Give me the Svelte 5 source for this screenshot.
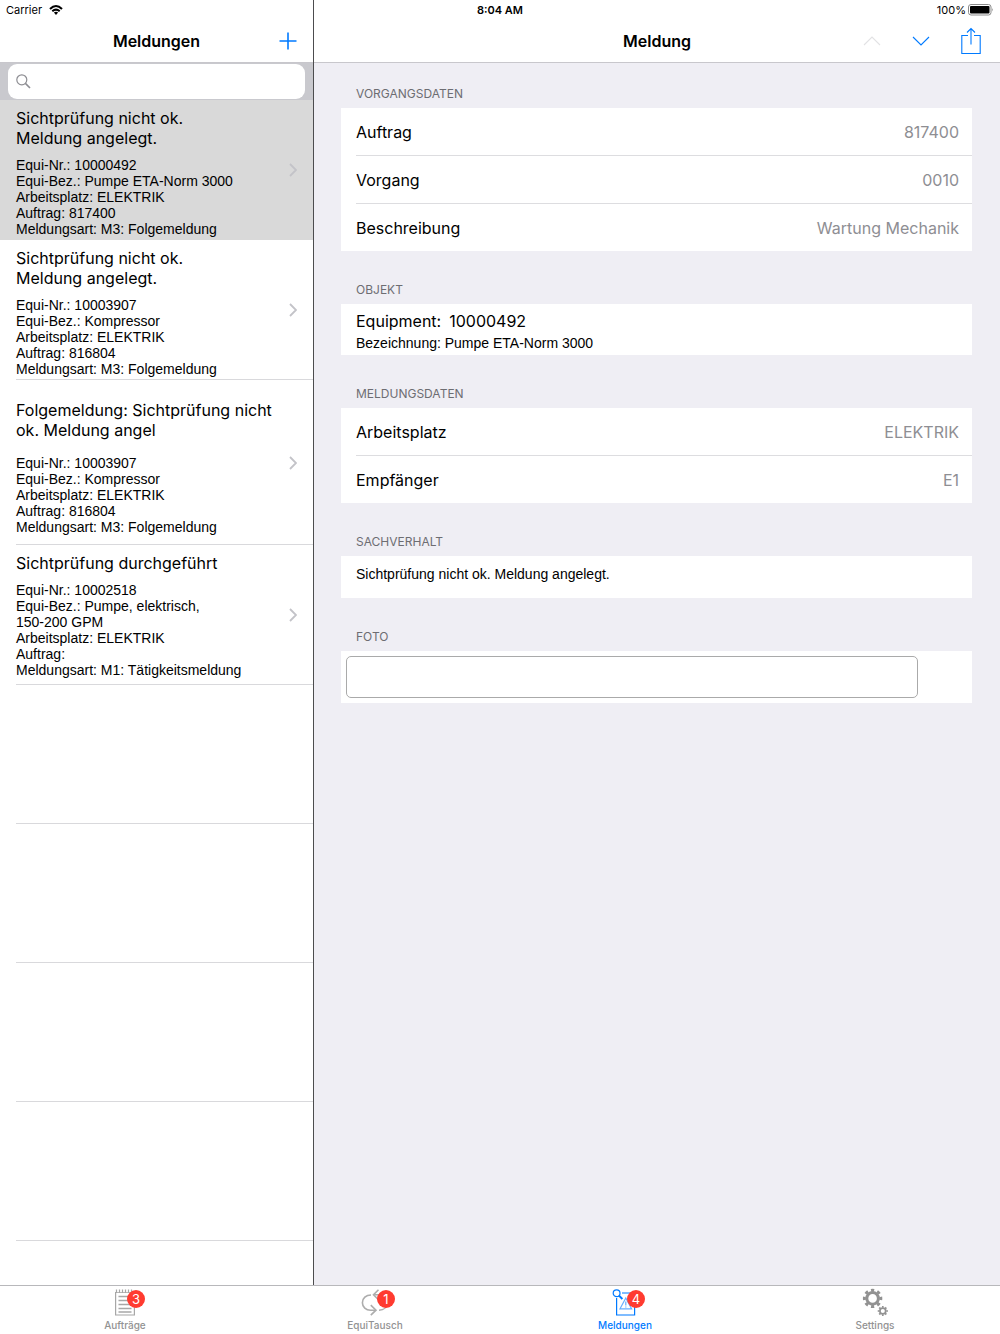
<script>
    let query = $state('');
    let selected = $state(0);
    let activeTab = $state('Meldungen');

    const messages = [
        {
            title: 'Sichtprüfung nicht ok. Meldung angelegt.',
            lines: ['Equi-Nr.: 10000492', 'Equi-Bez.: Pumpe ETA-Norm 3000', 'Arbeitsplatz: ELEKTRIK', 'Auftrag: 817400', 'Meldungsart: M3: Folgemeldung']
        },
        {
            title: 'Sichtprüfung nicht ok. Meldung angelegt.',
            lines: ['Equi-Nr.: 10003907', 'Equi-Bez.: Kompressor', 'Arbeitsplatz: ELEKTRIK', 'Auftrag: 816804', 'Meldungsart: M3: Folgemeldung']
        },
        {
            title: 'Folgemeldung: Sichtprüfung nicht ok. Meldung angel',
            wide: true,
            lines: ['Equi-Nr.: 10003907', 'Equi-Bez.: Kompressor', 'Arbeitsplatz: ELEKTRIK', 'Auftrag: 816804', 'Meldungsart: M3: Folgemeldung']
        },
        {
            title: 'Sichtprüfung durchgeführt',
            lines: ['Equi-Nr.: 10002518', 'Equi-Bez.: Pumpe, elektrisch,', '150-200 GPM', 'Arbeitsplatz: ELEKTRIK', 'Auftrag:', 'Meldungsart: M1: Tätigkeitsmeldung']
        }
    ];

    const vorgang = [
        ['Auftrag', '817400'],
        ['Vorgang', '0010'],
        ['Beschreibung', 'Wartung Mechanik']
    ];

    const meldung = [
        ['Arbeitsplatz', 'ELEKTRIK'],
        ['Empfänger', 'E1']
    ];

    const tabs = [
        { name: 'Aufträge', badge: 3 },
        { name: 'EquiTausch', badge: 1 },
        { name: 'Meldungen', badge: 4 },
        { name: 'Settings', badge: 0 }
    ];
</script>

{#snippet fields(rows)}
    <dl class="card">
        {#each rows as [label, value]}
            <div class="field">
                <dt>{label}</dt>
                <dd>{value}</dd>
            </div>
        {/each}
    </dl>
{/snippet}

<div class="screen">
    <div class="status">
        <div class="carrier">
            <span>Carrier</span>
            <svg width="14" height="10" viewBox="0 0 14 10" fill="none" stroke="#000" stroke-width="2">
                <path d="M1 4 Q7 -2 13 4" />
                <path d="M3.3 6.3 Q7 2.9 10.7 6.3" />
                <path d="M4.9 7.6 Q7 5.8 9.1 7.6 L7 9.9 Z" fill="#000" stroke="none" />
            </svg>
        </div>
        <span class="time">8:04 AM</span>
        <div class="power">
            <span>100%</span>
            <svg width="26" height="12" viewBox="0 0 26 12">
                <rect x="0.5" y="0.5" width="22.5" height="10.5" rx="2.5" fill="#fff" stroke="#8a8a8a" />
                <rect x="2" y="2" width="19.5" height="7.5" rx="1" />
                <path d="M24 4 Q25.6 5.7 24 7.5 Z" fill="#8a8a8a" />
            </svg>
        </div>
    </div>

    <div class="panes">
        <aside>
            <header class="bar">
                <h1>Meldungen</h1>
                <div class="tools">
                    <button aria-label="Neue Meldung">
                        <svg width="18" height="18" viewBox="0 0 18 18" stroke="#007aff" stroke-width="1.6">
                            <path d="M9 0.5V17.5M0.5 9H17.5" />
                        </svg>
                    </button>
                </div>
            </header>
            <div class="search">
                <label>
                    <svg width="15" height="15" viewBox="0 0 15 15" fill="none" stroke="#8e8e93" stroke-width="1.2">
                        <circle cx="5.8" cy="5.8" r="5" />
                        <path d="M9.4 9.4L14 14" stroke-width="1.6" />
                    </svg>
                    <input type="search" aria-label="Suchen" bind:value={query}>
                </label>
            </div>
            <ul>
                {#each messages as message, i}
                    <li>
                        <button class="item" class:selected={selected === i} class:wide={message.wide} onclick={() => selected = i}>
                            <span class="text">
                                <span class="title">{message.title}</span>
                                {#each message.lines as line}
                                    <span class="line">{line}</span>
                                {/each}
                            </span>
                            <svg width="8" height="14" viewBox="0 0 8 14" fill="none" stroke="#c3c3c8" stroke-width="1.8">
                                <path d="M1 1L7 7L1 13" />
                            </svg>
                        </button>
                    </li>
                {/each}
                {#each [1, 2, 3, 4] as _}
                    <li class="empty"></li>
                {/each}
            </ul>
        </aside>

        <main>
            <header class="bar">
                <h1>Meldung</h1>
                <div class="tools">
                    <button aria-label="Vorherige Meldung" disabled>
                        <svg width="18" height="10" viewBox="0 0 18 10" fill="none" stroke="#e2e2e4" stroke-width="1.1">
                            <path d="M1 9L9 1L17 9" />
                        </svg>
                    </button>
                    <button aria-label="Nächste Meldung">
                        <svg width="18" height="10" viewBox="0 0 18 10" fill="none" stroke="#007aff" stroke-width="1.1">
                            <path d="M1 1L9 9L17 1" />
                        </svg>
                    </button>
                    <button aria-label="Teilen">
                        <svg width="20" height="28" viewBox="0 0 20 28" fill="none" stroke="#007aff" stroke-width="1.1">
                            <path d="M7 8.5H0.8V26.5H19.2V8.5H13" />
                            <path d="M10 17.5V1.5M6 5.5L10 1.5L14 5.5" />
                        </svg>
                    </button>
                </div>
            </header>
            <div class="detail">
                <section>
                    <h2>VORGANGSDATEN</h2>
                    {@render fields(vorgang)}
                </section>
                <section>
                    <h2>OBJEKT</h2>
                    <div class="card object">
                        <p class="equipment"><span>Equipment:</span><span>10000492</span></p>
                        <p class="small">Bezeichnung: Pumpe ETA-Norm 3000</p>
                    </div>
                </section>
                <section>
                    <h2>MELDUNGSDATEN</h2>
                    {@render fields(meldung)}
                </section>
                <section>
                    <h2>SACHVERHALT</h2>
                    <div class="card facts">
                        <p class="small">Sichtprüfung nicht ok. Meldung angelegt.</p>
                    </div>
                </section>
                <section>
                    <h2>FOTO</h2>
                    <div class="card photo">
                        <div class="frame"></div>
                    </div>
                </section>
            </div>
        </main>
    </div>

    <nav>
        {#each tabs as tab}
            <button class="tab" class:active={activeTab === tab.name} onclick={() => activeTab = tab.name}>
                <span class="icon">
                    <svg width="28" height="28" viewBox="0 0 28 28" fill="none" stroke="currentColor" stroke-width="1.2">
                        {#if tab.name === 'Aufträge'}
                            <g opacity="0.8">
                                <path d="M4.6 4V27H23.4V4" />
                                <path d="M4.6 4.5H23.4" stroke-width="0.8" />
                                <path d="M5.5 1.5V5M8.5 1.5V5M11.5 1.5V5M14.5 1.5V5M17.5 1.5V5M20.5 1.5V5" />
                                <path d="M7.5 8.5H20.5M7.5 12.5H20.5M7.5 16.5H20.5M7.5 20.5H20.5M7.5 24H20.5" stroke-width="1.3" />
                            </g>
                        {:else if tab.name === 'EquiTausch'}
                            <g opacity="0.75" stroke-width="1.6">
                                <path d="M10 7C5 7 1.4 10.3 1.4 14.7C1.4 19 5 22.2 9.5 22.2H14.5" />
                                <path d="M9.8 17.2L15 22.2L9.8 27.2" />
                                <path d="M17.5 1.8L12.5 6.8L17.5 11.8" />
                                <path d="M12.5 6.8H18C23 6.8 26.2 10.2 26.2 14.4C26.2 19 23 22.2 18 22.2" />
                            </g>
                        {:else if tab.name === 'Meldungen'}
                            <path d="M5.6 10V27H23.6V5H11" />
                            <circle cx="5.6" cy="5.2" r="3.4" />
                            <path d="M8 7.6L11.4 11" stroke-width="2" />
                            <g opacity="0.6">
                                <path d="M14.8 10L9 20.8H20.6Z" />
                                <path d="M14.8 13.5V17.5M14.8 18.5V19.6" />
                            </g>
                        {:else}
                            <circle cx="11.6" cy="10.4" r="5.8" stroke-width="3" />
                            <circle cx="11.6" cy="10.4" r="8.2" stroke-width="3" pathLength="16" stroke-dasharray="1 1" stroke-dashoffset="0.5" />
                            <circle cx="21.8" cy="23" r="2.9" stroke-width="1.7" />
                            <circle cx="21.8" cy="23" r="4.2" stroke-width="1.7" pathLength="16" stroke-dasharray="1 1" stroke-dashoffset="0.5" />
                        {/if}
                    </svg>
                    {#if tab.badge}
                        <span class="badge">{tab.badge}</span>
                    {/if}
                </span>
                <span class="name">{tab.name}</span>
            </button>
        {/each}
    </nav>
</div>

<style>
:global(body) {
    margin: 0;
    background: #ffffff;
}

.screen {
    display: grid;
    grid-template: minmax(0, 1fr) auto / minmax(0, 1fr);
    min-height: 100vh;
    font-family: Inter, "Liberation Sans", sans-serif;
    font-size: 16px;
    color: #000000;
}

h1, h2, p, ul, dl, dd {
    margin: 0;
    padding: 0;
}

button {
    border: 0;
    padding: 0;
    background: none;
    font: inherit;
    color: inherit;
    cursor: pointer;
}

svg {
    display: block;
    flex: none;
}

/* the status line shares the first grid cell with the panes */
.status {
    grid-area: 1 / 1;
    align-self: start;
    z-index: 1;
    display: grid;
    grid-template-columns: 1fr auto 1fr;
    align-items: center;
    height: 20px;
    padding: 0 6px;
    font-size: 11px;
}

.carrier, .power {
    display: flex;
    align-items: center;
    gap: 7px;
}

.power {
    justify-content: flex-end;
    gap: 2px;
}

.time {
    font-weight: 600;
}

.panes {
    grid-area: 1 / 1;
    display: flex;
}

aside {
    box-sizing: border-box;
    width: 314px;
    flex: none;
    border-right: 1px solid #4c4c4e;
    background: #ffffff;
}

main {
    flex: 1;
    min-width: 0;
    background: #efeef4;
}

.bar {
    display: grid;
    grid-template-columns: 1fr auto 1fr;
    align-items: center;
    height: 42px;
    padding: 20px 16px 0;
    border-bottom: 1px solid #c8c7cc;
    background: #ffffff;
}

h1 {
    grid-column: 2;
    font-size: 16px;
    font-weight: 600;
}

.tools {
    display: flex;
    align-items: center;
    justify-content: flex-end;
    gap: 31px;
}

main .tools {
    padding-right: 3px;
}

.search {
    padding: 1px 8px;
    background: #c9c9ce;
}

.search label {
    display: flex;
    align-items: center;
    gap: 8px;
    height: 35px;
    padding: 0 8px;
    border-radius: 9px;
    background: #ffffff;
}

.search input {
    flex: 1;
    min-width: 0;
    border: 0;
    outline: none;
    background: none;
    font: inherit;
}

ul {
    list-style: none;
}

.item {
    box-sizing: border-box;
    display: flex;
    align-items: center;
    width: 100%;
    min-height: 140px;
    padding: 0 16px;
    text-align: left;
    background: linear-gradient(#d9d9dc, #d9d9dc) 16px 100% / 100% 1px no-repeat;
}

.item.selected {
    background: #d9d9d9;
}

.text {
    flex: 1;
    align-self: flex-start;
    padding-top: 8px;
}

.title, .line {
    display: block;
}

.title {
    max-width: 256px;
    margin-bottom: 9px;
    line-height: 20px;
    text-wrap: balance;
}

.line, .small {
    font-family: "Liberation Sans", Arial, sans-serif;
    font-size: 14px;
    line-height: 16px;
}

.wide {
    min-height: 165px;
}

.wide .text {
    padding-top: 20px;
}

.wide .title {
    margin-bottom: 15px;
    text-wrap: wrap;
}

.empty {
    box-sizing: border-box;
    height: 139px;
    margin-left: 16px;
    border-bottom: 1px solid #d9d9dc;
}

.detail {
    display: flex;
    flex-direction: column;
    gap: 31px;
    padding: 23px 28px 23px 27px;
}

h2 {
    padding: 0 15px 6px;
    font-size: 12px;
    font-weight: 400;
    line-height: 16px;
    color: #6d6d72;
}

.card {
    background: #ffffff;
}

.field {
    display: flex;
    align-items: center;
    justify-content: space-between;
    height: 47px;
    margin-left: 15px;
    padding-right: 13px;
}

.field + .field {
    border-top: 1px solid #dddde0;
}

dd {
    color: #8e8e93;
}

.object {
    padding: 7px 15px 4px;
}

.equipment {
    display: flex;
    gap: 8px;
    margin-bottom: 4px;
    line-height: 20px;
}

.facts {
    padding: 10px 15px 16px;
}

.photo {
    padding: 5px 54px 5px 5px;
}

.frame {
    height: 40px;
    border: 1px solid #aaaaaa;
    border-radius: 5px;
}

nav {
    display: flex;
    height: 48px;
    border-top: 1px solid #b8b8bb;
    background: #ffffff;
}

.tab {
    flex: 1;
    display: flex;
    flex-direction: column;
    align-items: center;
    padding-top: 2px;
    color: #929292;
}

.tab.active {
    color: #007aff;
}

.icon {
    position: relative;
}

.badge {
    position: absolute;
    top: 2px;
    left: 16px;
    width: 18px;
    border-radius: 9px;
    background: #ff3b30;
    font-size: 13px;
    line-height: 18px;
    text-align: center;
    color: #ffffff;
}

.name {
    margin-top: 2px;
    font-size: 10px;
    font-weight: 500;
    line-height: 14px;
}
</style>
